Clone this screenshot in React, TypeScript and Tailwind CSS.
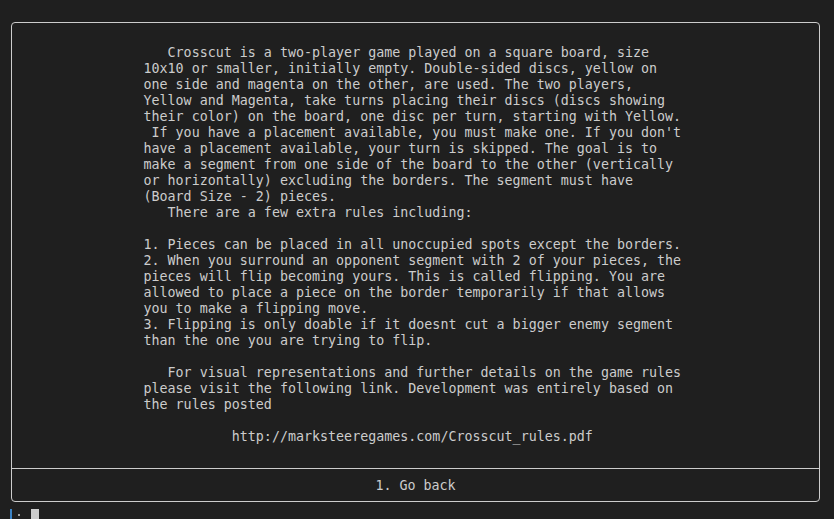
const rules = [
  "   Crosscut is a two-player game played on a square board, size",
  "10x10 or smaller, initially empty. Double-sided discs, yellow on",
  "one side and magenta on the other, are used. The two players,",
  "Yellow and Magenta, take turns placing their discs (discs showing",
  "their color) on the board, one disc per turn, starting with Yellow.",
  " If you have a placement available, you must make one. If you don't",
  "have a placement available, your turn is skipped. The goal is to",
  "make a segment from one side of the board to the other (vertically",
  "or horizontally) excluding the borders. The segment must have",
  "(Board Size - 2) pieces.",
  "   There are a few extra rules including:",
  "",
  "1. Pieces can be placed in all unoccupied spots except the borders.",
  "2. When you surround an opponent segment with 2 of your pieces, the",
  "pieces will flip becoming yours. This is called flipping. You are",
  "allowed to place a piece on the border temporarily if that allows",
  "you to make a flipping move.",
  "3. Flipping is only doable if it doesnt cut a bigger enemy segment",
  "than the one you are trying to flip.",
  "",
  "   For visual representations and further details on the game rules",
  "please visit the following link. Development was entirely based on",
  "the rules posted",
  "",
  "           http://marksteeregames.com/Crosscut_rules.pdf",
];

export default function App() {
  return (
    <div
      className="w-[834px] h-[519px] overflow-hidden bg-[#1f1f1f] text-[#cccccc] text-[13.33px] leading-[16px]"
      style={{ fontFamily: '"DejaVu Sans Mono", "Liberation Mono", monospace' }}
    >
      <div className="pt-[22px] pl-[11px]">
        <div className="w-[809px] h-[480px] border border-[#cccccc] rounded-[4px] flex flex-col">
          <div className="h-[446px] border-b border-[#cccccc] pt-[22px]">
            <pre className="w-[544px] mx-auto whitespace-pre font-[inherit]">
              {rules.join("\n")}
            </pre>
          </div>
          <div className="flex-1 flex items-center justify-center pt-[2px]">
            1. Go back
          </div>
        </div>
      </div>
      <div className="flex items-start h-[18px]">
        <div className="ml-[10px] mt-[7px] w-[2px] h-[11px] bg-[#3b82c4]" />
        <div className="ml-[6px] mt-[12px] w-[2px] h-[2px] bg-[#a0a0a0]" />
        <div className="ml-[11px] mt-[7px] w-[8px] h-[12px] bg-[#cccccc]" />
      </div>
    </div>
  );
}
